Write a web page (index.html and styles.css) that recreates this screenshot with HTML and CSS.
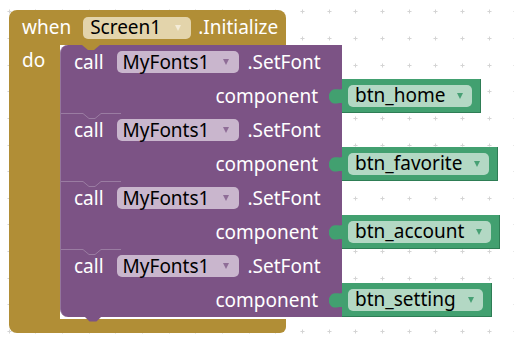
FILE: index.html
```html
<!DOCTYPE html>
<html>
<head>
<meta charset="utf-8">
<link rel="stylesheet" href="styles.css">
</head>
<body>
<div class="ws">
  <div class="event">
    <div class="head">
      <span class="lbl">when</span>
      <span class="pill gold-pill">Screen1<i class="arr"></i></span>
      <span class="lbl dot">.Initialize</span>
    </div>
    <div class="mid">
      <div class="do"><span class="lbl">do</span></div>
      <div class="stack">
        <div class="stmt first">
          <div class="pbody">
            <svg class="notch" width="24" height="6" viewBox="0 0 24 6"><path d="M2,0 L8,5 H14 L20,0 Z" fill="#b18e36"/></svg>
            <div class="row1"><span class="lbl">call</span><span class="pill purple-pill">MyFonts1<i class="arr"></i></span><span class="lbl dot2">.SetFont</span></div>
            <div class="row2"><span class="lbl">component</span></div>
          </div>
          <div class="value"><svg class="tab" width="14" height="24" viewBox="0 0 14 24"><path d="M14,0 V3 C14,8 6,3 2,7 C-1,10 -1,15 2,18 C6,22 14,16 14,21 V24 Z" fill="#42a070"/></svg><span class="pill green-pill">btn_home<i class="arr"></i></span></div>
        </div>
        <div class="stmt">
          <div class="pbody">
            <svg class="hl" width="60" height="7" viewBox="0 0 60 7"><path d="M0,0.5 H22 L28,5.5 H34 L40,0.5 H60" stroke="#9a7ca2" stroke-width="1" fill="none"/></svg>
            <div class="row1"><span class="lbl">call</span><span class="pill purple-pill">MyFonts1<i class="arr"></i></span><span class="lbl dot2">.SetFont</span></div>
            <div class="row2"><span class="lbl">component</span></div>
          </div>
          <div class="value"><svg class="tab" width="14" height="24" viewBox="0 0 14 24"><path d="M14,0 V3 C14,8 6,3 2,7 C-1,10 -1,15 2,18 C6,22 14,16 14,21 V24 Z" fill="#42a070"/></svg><span class="pill green-pill">btn_favorite<i class="arr"></i></span></div>
        </div>
        <div class="stmt">
          <div class="pbody">
            <svg class="hl" width="60" height="7" viewBox="0 0 60 7"><path d="M0,0.5 H22 L28,5.5 H34 L40,0.5 H60" stroke="#9a7ca2" stroke-width="1" fill="none"/></svg>
            <div class="row1"><span class="lbl">call</span><span class="pill purple-pill">MyFonts1<i class="arr"></i></span><span class="lbl dot2">.SetFont</span></div>
            <div class="row2"><span class="lbl">component</span></div>
          </div>
          <div class="value"><svg class="tab" width="14" height="24" viewBox="0 0 14 24"><path d="M14,0 V3 C14,8 6,3 2,7 C-1,10 -1,15 2,18 C6,22 14,16 14,21 V24 Z" fill="#42a070"/></svg><span class="pill green-pill">btn_account<i class="arr"></i></span></div>
        </div>
        <div class="stmt last">
          <div class="pbody">
            <svg class="hl" width="60" height="7" viewBox="0 0 60 7"><path d="M0,0.5 H22 L28,5.5 H34 L40,0.5 H60" stroke="#9a7ca2" stroke-width="1" fill="none"/></svg>
            <div class="row1"><span class="lbl">call</span><span class="pill purple-pill">MyFonts1<i class="arr"></i></span><span class="lbl dot2">.SetFont</span></div>
            <div class="row2"><span class="lbl">component</span></div>
            <svg class="btab" width="24" height="6" viewBox="0 0 24 6"><path d="M2,0 L7,5 Q7.5,5.5 8.5,5.5 H13.5 Q14.5,5.5 15,5 L20,0 Z" fill="#7c5385"/></svg>
          </div>
          <div class="value"><svg class="tab" width="14" height="24" viewBox="0 0 14 24"><path d="M14,0 V3 C14,8 6,3 2,7 C-1,10 -1,15 2,18 C6,22 14,16 14,21 V24 Z" fill="#42a070"/></svg><span class="pill green-pill">btn_setting<i class="arr"></i></span></div>
        </div>
      </div>
    </div>
    <div class="foot"></div>
  </div>
</div>
</body>
</html>
```
FILE: styles.css
```css
html, body {
  margin: 0;
  padding: 0;
}
body {
  width: 514px;
  height: 342px;
  overflow: hidden;
  font-family: "Noto Sans", "Open Sans", sans-serif;
  font-size: 19px;
  background-color: #fff;
  background-image: url("data:image/svg+xml,%3Csvg xmlns='http://www.w3.org/2000/svg' width='26.667' height='26.667'%3E%3Cpath d='M11.33 13.33h4M13.33 11.33v4' stroke='%23d4d4d4' stroke-width='1'/%3E%3C/svg%3E");
  background-size: 26.667px 26.667px;
  background-position: -4px -1.6px;
}
.ws {
  padding: 10px 0 0 9px;
}
.event {
  width: 277px;
}
.head {
  height: 35px;
  background: #b18e36;
  border-radius: 8px 8px 0 0;
  display: flex;
  align-items: center;
  padding-left: 13px;
  box-sizing: border-box;
}
.lbl {
  color: #fff;
  line-height: 1;
  white-space: nowrap;
}
.pill {
  display: inline-flex;
  align-items: center;
  height: 22px;
  border-radius: 5px;
  color: #000;
  line-height: 1;
  white-space: nowrap;
  box-sizing: border-box;
}
.arr {
  display: inline-block;
  width: 0;
  height: 0;
  border-left: 3.5px solid transparent;
  border-right: 3.5px solid transparent;
  border-top: 6px solid currentColor;
  margin-left: 14px;
}
.gold-pill {
  background: #e3d4ab;
  margin-left: 12px;
  padding: 0 10px 0 7px;
}
.gold-pill .arr { border-top-color: #f4ecd8; }
.dot { margin-left: 7px; }
.mid {
  display: flex;
}
.do {
  width: 51px;
  flex: none;
  background: #b18e36;
  padding: 0 0 0 13px;
  box-sizing: border-box;
}
.do .lbl {
  display: flex;
  align-items: center;
  height: 31px;
}
.stack {
  display: flex;
  flex-direction: column;
  padding-bottom: 2px;
}
.stmt {
  display: flex;
  align-items: flex-end;
  height: 68px;
}
.pbody {
  position: relative;
  width: 282px;
  height: 68px;
  flex: none;
  background: #7c5385;
  box-sizing: border-box;
  border-left: 1px solid #94759c;
}
.first .pbody { border-top-left-radius: 8px; }
.last .pbody { border-bottom-left-radius: 8px; }
.notch {
  position: absolute;
  left: 19px;
  top: 0;
}
.hl {
  position: absolute;
  left: 0;
  top: 0;
}
.btab {
  position: absolute;
  left: 21px;
  bottom: -5px;
}
.row1 {
  height: 34px;
  display: flex;
  align-items: center;
  padding-left: 13px;
}
.purple-pill {
  background: #c9b6cd;
  margin-left: 13px;
  padding: 0 10px 0 6px;
}
.purple-pill .arr { border-top-color: #8f6d97; }
.dot2 { margin-left: 8px; }
.row2 {
  height: 34px;
  display: flex;
  align-items: center;
  justify-content: flex-end;
  padding-right: 24px;
}
.value {
  position: relative;
  height: 34px;
  background: #42a070;
  display: flex;
  align-items: center;
  padding: 0 8px 0 6px;
  border-right: 1px solid #2e7d55;
  border-bottom: 1px solid #2e7d55;
  box-sizing: border-box;
}
.tab {
  position: absolute;
  left: -13px;
  top: 5px;
}
.green-pill {
  background: #b3d8c4;
  padding: 0 9px 0 7px;
}
.green-pill .arr { border-top-color: #47a074; margin-left: 12px; }
.foot {
  height: 14px;
  background: #b18e36;
  border-radius: 0 0 6px 8px;
}
```
